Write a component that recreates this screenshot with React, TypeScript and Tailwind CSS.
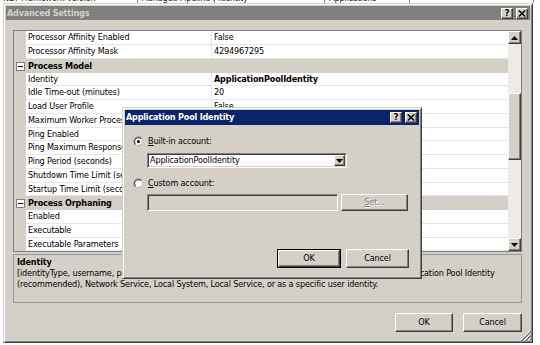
import React from 'react';

// classic 3D bevels
const raised =
  'border border-t-white border-l-white border-r-[#404040] border-b-[#404040] shadow-[inset_-1px_-1px_0_#808080]';
const sunken =
  'border border-t-[#808080] border-l-[#808080] border-r-white border-b-white shadow-[inset_1px_1px_0_#404040,inset_-1px_-1px_0_#d4d0c8]';

type Row = { name: string; value?: string; bold?: boolean; category?: boolean };

const rows: Row[] = [
  { name: 'Processor Affinity Enabled', value: 'False' },
  { name: 'Processor Affinity Mask', value: '4294967295' },
  { name: 'Process Model', category: true },
  { name: 'Identity', value: 'ApplicationPoolIdentity', bold: true },
  { name: 'Idle Time-out (minutes)', value: '20' },
  { name: 'Load User Profile', value: 'False' },
  { name: 'Maximum Worker Processes', value: '1' },
  { name: 'Ping Enabled', value: 'True' },
  { name: 'Ping Maximum Response Time (seconds)', value: '90' },
  { name: 'Ping Period (seconds)', value: '30' },
  { name: 'Shutdown Time Limit (seconds)', value: '90' },
  { name: 'Startup Time Limit (seconds)', value: '90' },
  { name: 'Process Orphaning', category: true },
  { name: 'Enabled', value: 'False' },
  { name: 'Executable', value: '' },
  { name: 'Executable Parameters', value: '' },
];

const CloseGlyph = () => (
  <svg width="8" height="7" viewBox="0 0 8 7">
    <path d="M0.8 0.5 L7.2 6.5 M7.2 0.5 L0.8 6.5" stroke="#000" strokeWidth="1.5" fill="none" />
  </svg>
);

const CaptionButtons = () => (
  <div className="flex items-center gap-[3px] pr-[2px]">
    <div className={`${raised} w-[12px] h-[11px] bg-[#d4d0c8] flex items-center justify-center text-[9px] font-bold leading-none text-black`}>
      ?
    </div>
    <div className={`${raised} w-[12px] h-[11px] bg-[#d4d0c8] flex items-center justify-center`}>
      <CloseGlyph />
    </div>
  </div>
);

const MinusBox = () => (
  <div className="w-[9px] h-[9px] border border-[#808080] bg-white flex items-center justify-center">
    <div className="w-[5px] h-[1px] bg-black" />
  </div>
);

const Radio = ({ checked }: { checked?: boolean }) => (
  <svg width="11" height="11" viewBox="0 0 12 12" className="shrink-0">
    <circle cx="6" cy="6" r="5.5" fill="#808080" />
    <path d="M9.89 2.11 A5.5 5.5 0 0 1 2.11 9.89 Z" fill="#fff" />
    <circle cx="6" cy="6" r="4.5" fill="#404040" />
    <path d="M9.18 2.82 A4.5 4.5 0 0 1 2.82 9.18 Z" fill="#d4d0c8" />
    <circle cx="6" cy="6" r="3.6" fill="#fff" />
    {checked && <circle cx="6" cy="6" r="1.7" fill="#000" />}
  </svg>
);

const ArrowDown = () => (
  <svg width="7" height="4" viewBox="0 0 7 4">
    <path d="M0 0 H7 L3.5 4 Z" fill="#000" />
  </svg>
);

const ArrowUp = () => (
  <svg width="7" height="4" viewBox="0 0 7 4">
    <path d="M0 4 H7 L3.5 0 Z" fill="#000" />
  </svg>
);

const Grip = () => (
  <svg width="12" height="12" viewBox="0 0 12 12">
    <path d="M11 2 L2 11 M11 6 L6 11 M11 10 L10 11" stroke="#fff" strokeWidth="1" />
    <path d="M12 2 L2 12 M12 3 L3 12 M12 6 L6 12 M12 7 L7 12 M12 10 L10 12" stroke="#808080" strokeWidth="1" />
  </svg>
);

function PropertyGrid() {
  return (
    <div className="flex h-[222px] border border-[#808080] bg-white">
      <div className="flex-1 flex flex-col">
        {rows.map((r, i) => (
          <div key={r.name} className={`flex shrink-0 ${i % 4 === 3 ? 'h-[13px]' : 'h-[14px]'}`}>
            <div className="w-[12px] shrink-0 bg-[#d4d0c8] flex items-center justify-center">
              {r.category && <MinusBox />}
            </div>
            {r.category ? (
              <div className="flex-1 bg-[#d4d0c8] font-bold pl-[2px] flex items-center whitespace-nowrap">
                {r.name}
              </div>
            ) : (
              <>
                <div className="w-[186px] shrink-0 border-r border-b border-[#e6e6e6] pl-[2px] flex items-center overflow-hidden whitespace-nowrap">
                  {r.name}
                </div>
                <div
                  className={`flex-1 border-b border-[#e6e6e6] pl-[2px] flex items-center whitespace-nowrap ${r.bold ? 'font-bold' : ''}`}
                >
                  {r.value}
                </div>
              </>
            )}
          </div>
        ))}
      </div>
      {/* scrollbar */}
      <div className="w-[13px] shrink-0 flex flex-col bg-[#ecebe7]">
        <div className={`${raised} h-[13px] bg-[#d4d0c8] flex items-center justify-center`}>
          <ArrowUp />
        </div>
        <div className="h-[49px]" />
        <div className={`${raised} h-[67px] bg-[#d4d0c8]`} />
        <div className="flex-1" />
        <div className={`${raised} h-[13px] bg-[#d4d0c8] flex items-center justify-center`}>
          <ArrowDown />
        </div>
      </div>
    </div>
  );
}

function PoolIdentityDialog() {
  return (
    <div className="absolute left-[122px] top-[107px] w-[300px] h-[172px] bg-[#d4d0c8] p-[2px] border border-t-[#d4d0c8] border-l-[#d4d0c8] border-r-[#404040] border-b-[#404040] shadow-[inset_1px_1px_0_#fff,inset_-1px_-1px_0_#808080] flex flex-col">
      <div className="h-[15px] bg-[#0a246a] flex items-center justify-between">
        <span className="pl-[1px] text-white font-bold text-[9px] tracking-[-0.2px]">Application Pool Identity</span>
        <CaptionButtons />
      </div>
      <div className="pl-[8px] pr-[10px] flex flex-col">
        <div className="mt-[10px] h-[12px] flex items-center gap-[4px]">
          <Radio checked />
          <span>
            <span className="underline">B</span>uilt-in account:
          </span>
        </div>
        <div className={`${sunken} ml-[14px] mt-[6px] w-[200px] h-[15px] bg-white flex items-center justify-between pl-[2px] pr-[1px]`}>
          <span>ApplicationPoolIdentity</span>
          <div className={`${raised} w-[11px] h-[11px] bg-[#d4d0c8] flex items-center justify-center`}>
            <ArrowDown />
          </div>
        </div>
        <div className="mt-[9px] h-[12px] flex items-center gap-[4px]">
          <Radio />
          <span>
            <span className="underline">C</span>ustom account:
          </span>
        </div>
        <div className="ml-[14px] mt-[5px] flex gap-[3px]">
          <div className={`${sunken} w-[191px] h-[17px] bg-[#d4d0c8]`} />
          <div className={`${raised} w-[67px] h-[17px] bg-[#d4d0c8] flex items-center justify-center text-[#808080] [text-shadow:1px_1px_0_#fff]`}>
            <span>
              <span className="underline">S</span>et...
            </span>
          </div>
        </div>
        <div className="mt-[38px] flex justify-end gap-[5px]">
          <div className="w-[64px] h-[19px] border border-black">
            <div className={`${raised} h-full flex items-center justify-center`}>OK</div>
          </div>
          <div className={`${raised} w-[63px] h-[19px] flex items-center justify-center`}>Cancel</div>
        </div>
      </div>
    </div>
  );
}

export default function App() {
  return (
    <div className="relative w-[540px] h-[345px] overflow-hidden bg-white text-black text-[9px] leading-[11px] tracking-[-0.15px] font-['DejaVu_Sans_Condensed','Liberation_Sans',sans-serif]">
      {/* list view header of the window behind, mostly hidden */}
      <div className="h-[3px] overflow-hidden">
        <div className="-mt-[7px] flex whitespace-nowrap text-[#222]">
          <div className="w-[138px] pl-[3px] border-r border-[#888]">NET Framework Version</div>
          <div className="w-[77px] pl-[3px] border-r border-[#888] overflow-hidden">Managed Pipeline Mode</div>
          <div className="w-[110px] pl-[3px] border-r border-[#888]">Identity</div>
          <div className="w-[85px] pl-[4px] border-r border-[#888]">Applications</div>
          <div className="w-[124px] border-r border-[#888]" />
        </div>
      </div>

      {/* Advanced Settings dialog */}
      <div className="relative ml-[3px] w-[530px] h-[340px] bg-[#d4d0c8] p-[2px] border border-t-[#d4d0c8] border-l-[#d4d0c8] border-r-[#404040] border-b-[#404040] shadow-[inset_1px_1px_0_#fff,inset_-1px_-1px_0_#808080] flex flex-col">
        <div className="h-[14px] bg-[#808080] flex items-center justify-between shrink-0">
          <span className="pl-[1px] text-[#d4d0c8] font-bold text-[9px] tracking-[-0.2px]">Advanced Settings</span>
          <CaptionButtons />
        </div>

        <div className="pl-[7px] pr-[8px] pt-[10px] flex flex-col">
          <PropertyGrid />

          <div className="mt-[2px] h-[49px] border border-[#9a9a9a] pl-[3px] pt-[2px]">
            <div className="font-bold">Identity</div>
            <div className="whitespace-nowrap">
              [identityType, username, password] Configures the application pool to run as built-in account, i.e. Application Pool Identity
            </div>
            <div className="whitespace-nowrap">
              (recommended), Network Service, Local System, Local Service, or as a specific user identity.
            </div>
          </div>

          <div className="mt-[10px] flex justify-end gap-[10px]">
            <div className={`${raised} w-[58px] h-[19px] flex items-center justify-center`}>OK</div>
            <div className={`${raised} w-[59px] h-[19px] flex items-center justify-center`}>Cancel</div>
          </div>
        </div>

        <div className="absolute right-[1px] bottom-[1px]">
          <Grip />
        </div>
      </div>

      <PoolIdentityDialog />
    </div>
  );
}
